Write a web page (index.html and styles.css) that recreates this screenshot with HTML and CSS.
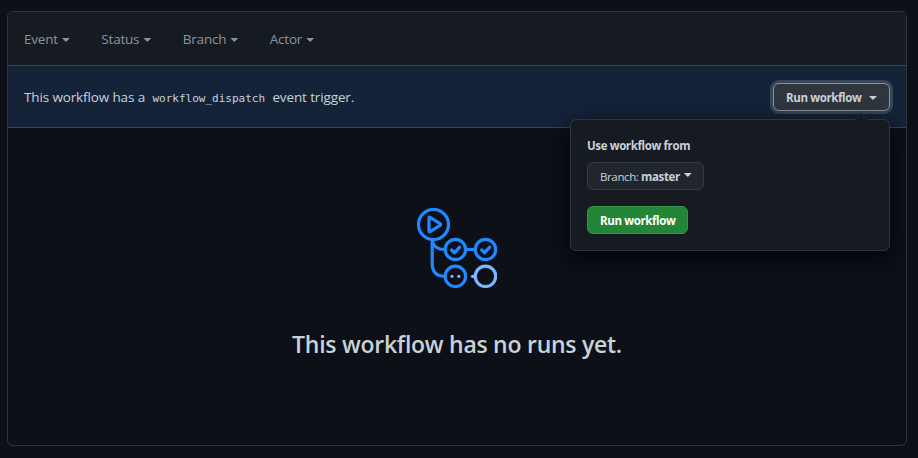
FILE: index.html
```html
<!DOCTYPE html>
<html lang="en">
<head>
<meta charset="utf-8">
<title>Workflow runs</title>
<link rel="stylesheet" href="styles.css">
</head>
<body>
<main class="box">
  <nav class="filters">
    <a class="filter"><span>Event</span><i class="caret"></i></a>
    <a class="filter"><span>Status</span><i class="caret"></i></a>
    <a class="filter"><span>Branch</span><i class="caret"></i></a>
    <a class="filter"><span>Actor</span><i class="caret"></i></a>
  </nav>
  <section class="dispatch">
    <p class="notice">This workflow has a <code>workflow_dispatch</code> event trigger.</p>
    <div class="dropdown">
      <button class="btn btn-focus"><span>Run workflow</span><i class="caret"></i></button>
      <div class="menu">
        <svg class="pointer" width="14" height="8" viewBox="0 0 14 8"><path d="M0 8 7 1l7 7" fill="#161b22" stroke="#252b33"/></svg>
        <h2 class="menu-title">Use workflow from</h2>
        <button class="btn btn-branch"><span>Branch: <b>master</b></span><i class="caret"></i></button>
        <button class="btn btn-primary"><span>Run workflow</span></button>
      </div>
    </div>
  </section>
  <section class="blank">
    <svg class="logo" width="80" height="80" viewBox="10 8 80 80" fill="none" stroke="#2188ff" stroke-width="3.2" stroke-linecap="round" stroke-linejoin="round">
      <circle cx="26.5" cy="24.5" r="15"/>
      <path d="M22 18.2v12.6q0 1.5 1.4.7l9.6-6.1q1.2-.9 0-1.8l-9.6-6.1q-1.4-.8-1.4.7z"/>
      <path d="M25.2 40v23.3c0 8.500 4 13 12.300 13M25.200 40.500c1.200 6 5 9 12.300 9M59 49.500h9"/>
      <circle cx="48.400" cy="49.500" r="10.200"/>
      <circle cx="78.500" cy="49.500" r="10.200"/>
      <circle cx="48.400" cy="76.300" r="10.200"/>
      <path d="m44.600 50 2.800 2.800 5.200-5.700M74.700 50l2.800 2.800 5.200-5.700"/>
      <g fill="#79b8ff" stroke="none"><circle cx="45" cy="76.300" r="1.600"/><circle cx="51.800" cy="76.300" r="1.600"/></g>
      <g stroke="#79b8ff"><circle cx="78.500" cy="76.300" r="10.200"/><path d="M65.500 76.300h2.500"/></g>
    </svg>
    <h1 class="title">This workflow has no runs yet.</h1>
  </section>
</main>
</body>
</html>
```
FILE: styles.css
```css
* { box-sizing: border-box; }

body {
  margin: 0;
  height: 458px;
  padding: 11px 11px 12px 7px;
  overflow: hidden;
  background: #0d1117;
  color: #c9d1d9;
  font-family: "Open Sans", "Noto Sans", sans-serif;
  font-size: 14px;
}

.box {
  height: 435px;
  border: 1px solid #30363d;
  border-radius: 6px;
}

.filters {
  display: flex;
  height: 53px;
  padding-left: 16px;
  align-items: center;
  background: #161b22;
  border-radius: 5px 5px 0 0;
  color: #8b949e;
  font-size: 13.5px;
  letter-spacing: -0.2px;
}

.filter {
  display: flex;
  align-items: center;
  gap: 4px;
  margin-right: 31.4px;
}

.caret {
  flex: none;
  width: 8px;
  height: 4px;
  margin-top: 3px;
  background: currentColor;
  clip-path: polygon(0 0, 100% 0, 50% 100%);
}

.dispatch {
  display: flex;
  height: 63px;
  padding: 0 16px;
  align-items: center;
  justify-content: space-between;
  background: #152339;
  border: solid #1f4a86;
  border-width: 1px 0;
}

.notice {
  margin: 0;
  font-size: 13.5px;
  letter-spacing: -0.13px;
  white-space: nowrap;
}

code {
  padding: 0 4px;
  font: 11px "DejaVu Sans Mono", monospace;
  letter-spacing: 0;
}

.dropdown { position: relative; }

.btn {
  display: flex;
  height: 28px;
  padding: 2px 12px 0;
  align-items: center;
  border: 1px solid #363b42;
  border-radius: 6px;
  background: #21262d;
  color: #c9d1d9;
  font: 700 11.5px/18px "Open Sans", "Noto Sans", sans-serif;
  letter-spacing: -0.38px;
  white-space: nowrap;
}

.btn-focus {
  width: 117px;
  justify-content: space-between;
  background: #30363d;
  border-color: #8b949e;
  box-shadow: 0 0 0 3px #36455a;
}

.btn-focus .caret { margin-top: 1px; }

.menu {
  position: absolute;
  z-index: 2;
  top: 36px;
  right: 0;
  width: 320px;
  height: 132px;
  padding: 17px 16px 15px;
  background: #161b22;
  border: 1px solid #30363d;
  border-radius: 6px;
  box-shadow: 0 8px 24px #010409;
}

.pointer {
  position: absolute;
  top: -8px;
  right: 21px;
}

.menu-title {
  margin: 0 0 7px;
  font: 700 11.5px/18px "Open Sans", "Noto Sans", sans-serif;
  letter-spacing: -0.38px;
}

.btn-branch {
  width: 117px;
  margin-bottom: 16px;
  gap: 4px;
  font-weight: 400;
}

.btn-branch b { font-weight: 700; }
.btn-branch .caret { margin-top: -3px; }

.btn-primary {
  width: 101px;
  background: #238636;
  border-color: #37934a;
  color: #fff;
}

.blank {
  display: flex;
  flex-direction: column;
  align-items: center;
  padding-top: 80px;
}

.title {
  margin: 38px 0 0;
  font-size: 23px;
  font-weight: 600;
  line-height: 36px;
  letter-spacing: -0.26px;
  white-space: nowrap;
}
```
